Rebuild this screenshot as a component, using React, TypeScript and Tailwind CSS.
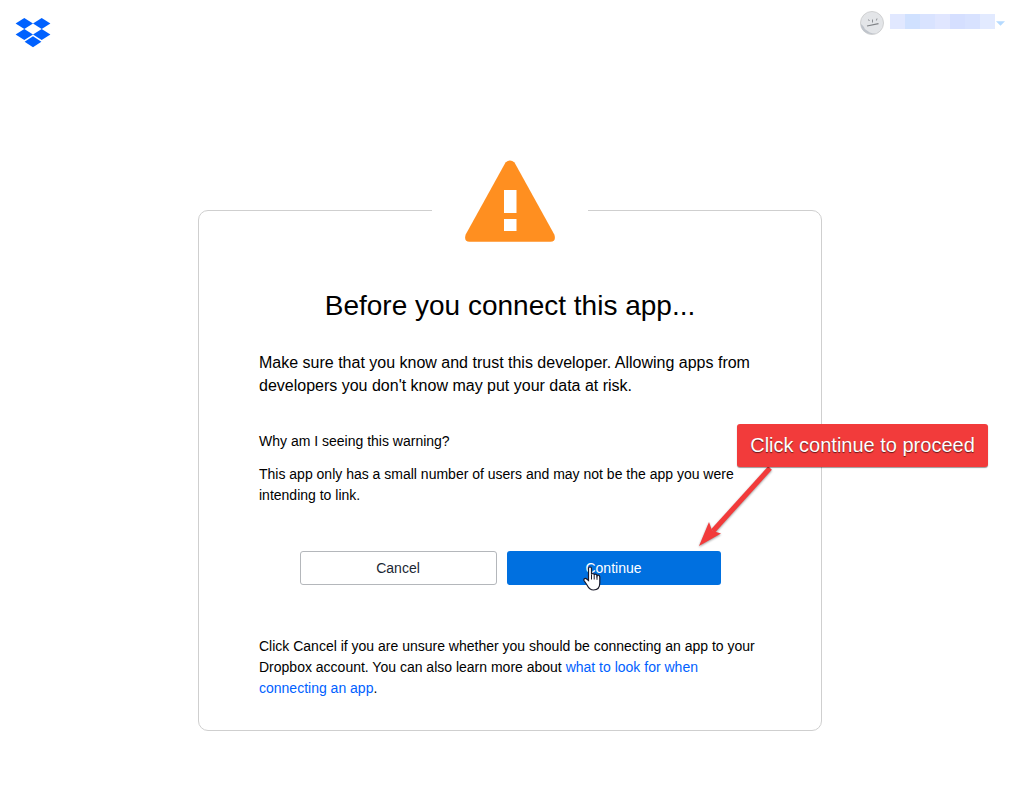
import type { ReactNode } from 'react';

const nameBlocks = ['bg-[#e1e8ff]', 'bg-[#d0e1ff]', 'bg-[#d9e3ff]', 'bg-[#e0e6ff]', 'bg-[#d5dfff]', 'bg-[#d8e2ff]', 'bg-[#e2eaff]'];

function DropboxLogo() {
  return (
    <svg viewBox="0 0 36 31" className="h-[31px] w-9" fill="#0061ff" aria-hidden="true">
      <path d="M9.3 0 18 5.5 9.3 11 0.6 5.5Z" />
      <path d="M26.7 0 35.4 5.5 26.7 11 18 5.5Z" />
      <path d="M9.3 11 18 16.5 9.3 22 0.6 16.5Z" />
      <path d="M26.7 11 35.4 16.5 26.7 22 18 16.5Z" />
      <path d="M18 18.300 26.400 23.800 18 29.300 9.600 23.800Z" />
    </svg>
  );
}

function Avatar() {
  return (
    <svg viewBox="0 0 24 24" className="h-6 w-6" fill="none" aria-hidden="true">
      <circle cx="12" cy="12" r="11.5" fill="#e3e5e8" stroke="#d0d1d2" />
      <path d="M0.8 13c2 1 3.5 3 4 5l5 3.500c2 .8 4 .9 6 .8C8 25 0.800 20 0.800 13Z" fill="#bfc4cb" />
      <path d="M7 15 18.500 12.700" stroke="#7f8286" strokeWidth="1.200" />
      <path d="M8.500 8.500l.8 1.500M12.500 8.500v3M17 7.500l-.6 2" stroke="#8b8e93" />
    </svg>
  );
}

function WarningIcon() {
  return (
    <svg viewBox="0 0 90 82" className="h-[82px] w-[90px]" aria-hidden="true">
      <path d="M40.5 2.600Q45-1.800 49.500 2.600L89.300 74.500Q91.500 81.500 85.500 81.700H4.500Q-1.500 81.500 0.700 74.500Z" fill="#ff8f20" />
      <path d="M39 30h12.500v23H39zM39 59h12.500v12H39z" fill="#fff" />
    </svg>
  );
}

function HandCursor() {
  return (
    <svg viewBox="0 0 18 25" className="h-[25px] w-[18px]" aria-hidden="true">
      <path
        d="M5.500 14.500V2.500Q5.500 1 7 1T8.500 2.500V8.500Q8.500 7.500 9.800 7.500T11.200 9Q11.300 8.200 12.500 8.200T14 9.800Q14.200 9.200 15.300 9.200T16.800 11V17C16.800 21.500 14.500 24 10.500 24C6.800 24 5.500 22 4 19L1 14.500Q0.500 13.200 1.600 12.600T4 13.200Z"
        fill="#fff"
        stroke="#1a1a2a"
        strokeWidth="1.200"
      />
      <path d="M8.500 8.500v5M11.200 9v4.500M14 9.800v4" stroke="#1a1a2a" fill="none" />
    </svg>
  );
}

function Arrow() {
  return (
    <svg viewBox="0 0 74 82" className="h-[82px] w-[74px] drop-shadow-[0_1px_1px_#00000066]" aria-hidden="true">
      <path d="M71 2 14 65" stroke="#f23b3b" strokeWidth="5" />
      <path d="M0 80 10 56 12.500 63 14 65 22 67.500Z" fill="#f23b3b" />
    </svg>
  );
}

function Callout({ children }: { children: ReactNode }) {
  return (
    <div className="absolute top-[213px] left-[538px] w-[251px]">
      <p className="rounded-[3px] bg-[#f23b3b] py-2 text-center text-[20px] leading-[27px] whitespace-nowrap text-white shadow-[0_1px_1px_#00000066] [text-shadow:0_1px_1px_#00000099]">
        {children}
      </p>
    </div>
  );
}

export default function App() {
  return (
    <div className="min-h-screen bg-white pb-[62px] font-['Liberation_Sans',Arial,sans-serif] text-sm leading-[21px] text-black">
      <header className="flex items-start justify-between pt-[11px] pr-[17px] pl-[15px]">
        <a href="#home" aria-label="Dropbox" className="pt-[7px]">
          <DropboxLogo />
        </a>
        <button type="button" aria-label="Account menu" className="flex items-center">
          <Avatar />
          <span className="ml-1.5 flex pb-[3px]">
            {nameBlocks.map((color) => (
              <span key={color} className={`h-[15px] w-[15px] ${color}`} />
            ))}
          </span>
          <svg viewBox="0 0 10 5" className="ml-px h-[5px] w-[9px]" fill="#b5daff" aria-hidden="true">
            <path d="M0 0h10L5 5Z" />
          </svg>
        </button>
      </header>

      <main className="mx-auto mt-[161px] w-full max-w-[626px] pr-0.5">
        <section className="relative rounded-[10px] border border-[#cfcfcf] px-[60px] pt-[77px] pb-[31px]">
          {/* Icon sits over the top border */}
          <div className="absolute -top-[51px] left-1/2 flex w-[156px] -translate-x-1/2 justify-center bg-white">
            <WarningIcon />
          </div>

          <h1 className="text-center text-[28px] leading-9">Before you connect this app...</h1>
          <p className="mt-[27px] text-base leading-[23px]">
            Make sure that you know and trust this developer. Allowing apps from developers you don't know may put your
            data at risk.
          </p>
          <h2 className="mt-[34px]">Why am I seeing this warning?</h2>
          <p className="mt-3">
            This app only has a small number of users and may not be the app you were intending to link.
          </p>

          <div className="mt-[45px] flex justify-center gap-2.5">
            <button type="button" className="h-[34px] w-[197px] rounded-[3px] border border-[#b4b7bb] text-[#1b2733]">
              Cancel
            </button>
            <button type="button" className="relative h-[34px] w-[214px] rounded-[3px] bg-[#0070e0] text-white">
              Continue
              <span className="absolute top-[15px] left-[76px]">
                <HandCursor />
              </span>
            </button>
          </div>

          <p className="mt-[51px]">
            Click Cancel if you are unsure whether you should be connecting an app to your Dropbox account. You can also
            learn more about{' '}
            <a href="#learn-more" className="text-[#0061ff]">
              what to look for when connecting an app
            </a>
            .
          </p>

          {/* Annotation */}
          <div className="absolute top-[255px] left-[500px]">
            <Arrow />
          </div>
          <Callout>Click continue to proceed</Callout>
        </section>
      </main>
    </div>
  );
}
